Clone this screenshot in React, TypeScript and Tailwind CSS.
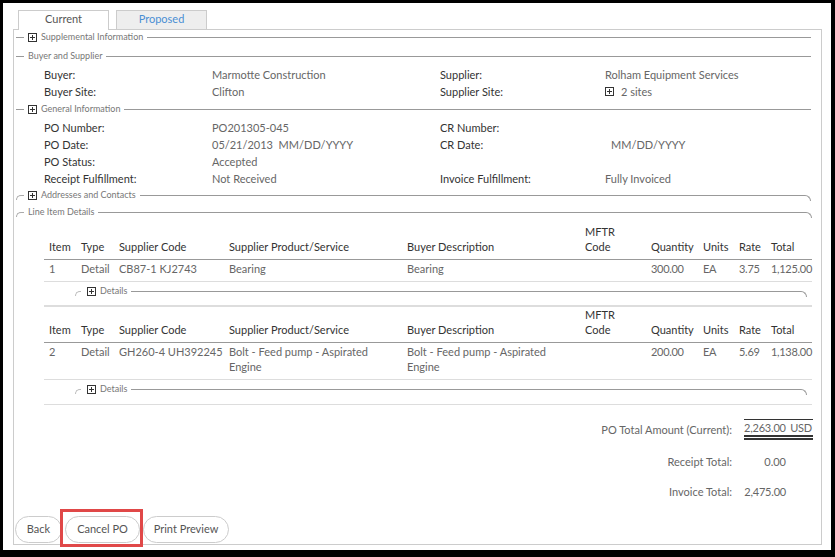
import React from "react";

const PlusBox = ({ className = "" }: { className?: string }) => (
  <svg width="9" height="9" viewBox="0 0 9 9" className={"block shrink-0 " + className}>
    <rect x="0.5" y="0.5" width="8" height="8" fill="white" stroke="#333" />
    <path d="M4.5 2v5M2 4.5h5" stroke="#333" />
  </svg>
);

function Legend({
  text,
  plus = false,
  round = false,
  className = "",
}: {
  text: string;
  plus?: boolean;
  round?: boolean;
  className?: string;
}) {
  return (
    <div className={"flex h-[16px] items-start " + className}>
      {round ? (
        <div className="mt-[8px] h-[5px] w-[8px] rounded-tl-[6px] border-l border-t border-[#aaa]" />
      ) : (
        <div className="mt-[8px] h-px w-[8px] bg-[#999]" />
      )}
      {plus && <PlusBox className="ml-[4px] mt-[4px]" />}
      <span className="ml-[4px] text-[9px] leading-[16px] text-[#777]">{text}</span>
      {round ? (
        <div className="ml-[4px] mt-[8px] h-[6px] flex-1 rounded-tr-[8px] border-r border-t border-[#999]" />
      ) : (
        <div className="ml-[4px] mt-[8px] h-px flex-1 bg-[#999]" />
      )}
    </div>
  );
}

function DataRow({ l1, v1, l2, v2 }: { l1: string; v1: React.ReactNode; l2?: string; v2?: React.ReactNode }) {
  return (
    <div className="grid h-[17px] grid-cols-[168px_228px_165px_1fr] items-center leading-[17px]">
      <span className="text-[#333]">{l1}</span>
      <span className="text-[#666]">{v1}</span>
      <span className="text-[#333]">{l2}</span>
      <span className="text-[#666]">{v2}</span>
    </div>
  );
}

const cols = "grid grid-cols-[32px_38px_110px_178px_178px_66px_52px_36px_32px_47px]";

function HeaderRow({ first }: { first: boolean }) {
  const h = ["Item", "Type", "Supplier Code", "Supplier Product/Service", "Buyer Description"];
  const h2 = ["Quantity", "Units", "Rate", "Total"];
  return (
    <div className={cols + " items-end border-b border-[#999] pb-[5px] leading-[15px] text-[#333] " + (first ? "pt-[4px]" : "pt-0")}>
      {h.map((t) => (
        <span key={t} className="pl-[5px]">{t}</span>
      ))}
      <span className="pl-[5px]">
        MFTR
        <br />
        Code
      </span>
      {h2.map((t) => (
        <span key={t} className="pl-[5px]">{t}</span>
      ))}
    </div>
  );
}

function ItemRow({ cells }: { cells: React.ReactNode[] }) {
  return (
    <div className={cols + " items-start border-b border-[#ddd] pb-[5px] pt-[1px] leading-[15px] text-[#666]"}>
      {cells.map((c, i) => (
        <span key={i} className={"pl-[5px] " + (i >= 6 ? "tracking-[-0.3px]" : "")}>{c}</span>
      ))}
    </div>
  );
}

function DetailsLegend({ className = "" }: { className?: string }) {
  return (
    <div className={"flex h-[16px] items-start pl-[31px] pr-[5px] " + className}>
      <div className="mt-[8px] h-[5px] w-[6px] rounded-tl-[6px] border-l border-t border-[#bbb]" />
      <PlusBox className="ml-[6px] mt-[4px]" />
      <span className="ml-[4px] text-[9px] leading-[16px] text-[#777]">Details</span>
      <div className="ml-[4px] mt-[8px] h-[6px] flex-1 rounded-tr-[8px] border-r border-t border-[#999]" />
    </div>
  );
}

export default function App() {
  return (
    <div
      className="h-[557px] w-[835px] bg-black pb-[7px] pl-[3px] pr-[4px] pt-[3px] text-[11px]"
      style={{ fontFamily: "Lato, 'Open Sans', Arial, sans-serif" }}
    >
      <div className="flex h-full w-full flex-col bg-white pb-[5px] pl-[10px] pr-[9px]">
        {/* Tabs */}
        <div className="flex h-[26px] items-end gap-[7px] pl-[5px]">
          <div className="relative -mb-px flex h-[20px] w-[91px] items-center justify-center border border-b-0 border-[#ccc] bg-white pb-[2px] text-[#555]">
            Current
          </div>
          <div className="flex h-[19px] w-[91px] items-center justify-center border border-b-0 border-[#ccc] bg-[#eee] pb-[1px] text-[#4a8fd4]">
            Proposed
          </div>
        </div>
        {/* Panel */}
        <div className="flex flex-1 flex-col border border-[#ccc] pb-px pl-px">
          <Legend text="Supplemental Information" plus className="-mt-px ml-px mr-[10px]" />
          <Legend text="Buyer and Supplier" className="ml-px mr-[10px] mt-[3px]" />
          <div className="mt-[2px] pl-[29px]">
            <DataRow l1="Buyer:" v1="Marmotte Construction" l2="Supplier:" v2="Rolham Equipment Services" />
            <DataRow
              l1="Buyer Site:"
              v1="Clifton"
              l2="Supplier Site:"
              v2={
                <span className="flex items-center gap-[7px]">
                  <PlusBox />
                  <span>2 sites</span>
                </span>
              }
            />
          </div>
          <Legend text="General Information" plus className="ml-px mr-[10px] mt-px" />
          <div className="mt-[2px] pl-[29px]">
            <DataRow l1="PO Number:" v1="PO201305-045" l2="CR Number:" v2="" />
            <DataRow
              l1="PO Date:"
              v1={<span>05/21/2013&nbsp;&nbsp;MM/DD/YYYY</span>}
              l2="CR Date:"
              v2={<span className="pl-[6px]">MM/DD/YYYY</span>}
            />
            <DataRow l1="PO Status:" v1="Accepted" />
            <DataRow l1="Receipt Fulfillment:" v1="Not Received" l2="Invoice Fulfillment:" v2="Fully Invoiced" />
          </div>
          <Legend text="Addresses and Contacts" plus round className="ml-px mr-[10px]" />
          <Legend text="Line Item Details" round className="ml-px mr-[9px] mt-px" />

          {/* Line items */}
          <div className="ml-[29px] mr-[9px]">
            <HeaderRow first />
            <ItemRow cells={["1", "Detail", "CB87-1 KJ2743", "Bearing", "Bearing", "", "300.00", "EA", "3.75", "1,125.00"]} />
            <DetailsLegend className="mt-px" />
            <div className="mt-[6px] h-[2px] bg-[#ddd]" />
            <HeaderRow first={false} />
            <ItemRow
              cells={[
                "2",
                "Detail",
                "GH260-4 UH392245",
                "Bolt - Feed pump - Aspirated Engine",
                "Bolt - Feed pump - Aspirated Engine",
                "",
                "200.00",
                "EA",
                "5.69",
                "1,138.00",
              ]}
            />
            <DetailsLegend className="mt-px" />
            <div className="mt-[7px] h-px bg-[#ddd]" />
          </div>

          {/* Totals */}
          <div className="mr-[8px] mt-[14px] flex flex-col items-end leading-[15px] text-[#666]">
            <div className="flex items-center">
              <span className="mr-[12px]">PO Total Amount (Current):</span>
              <span className="flex w-[69px] justify-between border-b-[5px] border-t border-double border-b-[#333] border-t-[#333] pr-px tracking-[-0.2px]">
                <span>2,263.00</span>
                <span>USD</span>
              </span>
            </div>
            <div className="mt-[14px] flex items-center">
              <span className="mr-[12px]">Receipt Total:</span>
              <span className="w-[69px]">
                <span className="block w-[42px] text-right">0.00</span>
              </span>
            </div>
            <div className="mt-[15px] flex items-center">
              <span className="mr-[12px]">Invoice Total:</span>
              <span className="w-[69px]">
                <span className="block w-[42px] text-right tracking-[-0.2px]">2,475.00</span>
              </span>
            </div>
          </div>

          <div className="flex-1" />
          {/* Buttons */}
          <div className="flex gap-[3px]">
            <button className="h-[27px] w-[47px] rounded-full border border-[#ccc] bg-white text-[#555]">Back</button>
            <div className="relative">
              <button className="h-[27px] w-[75px] rounded-full border border-[#ccc] bg-white text-[#555]">Cancel PO</button>
              <div className="pointer-events-none absolute -bottom-[4px] -left-[5px] -right-[3px] -top-[7px] border-[3px] border-[#e04848]" />
            </div>
            <button className="h-[27px] w-[86px] rounded-full border border-[#ccc] bg-white text-[#555]">Print Preview</button>
          </div>
        </div>
      </div>
    </div>
  );
}
